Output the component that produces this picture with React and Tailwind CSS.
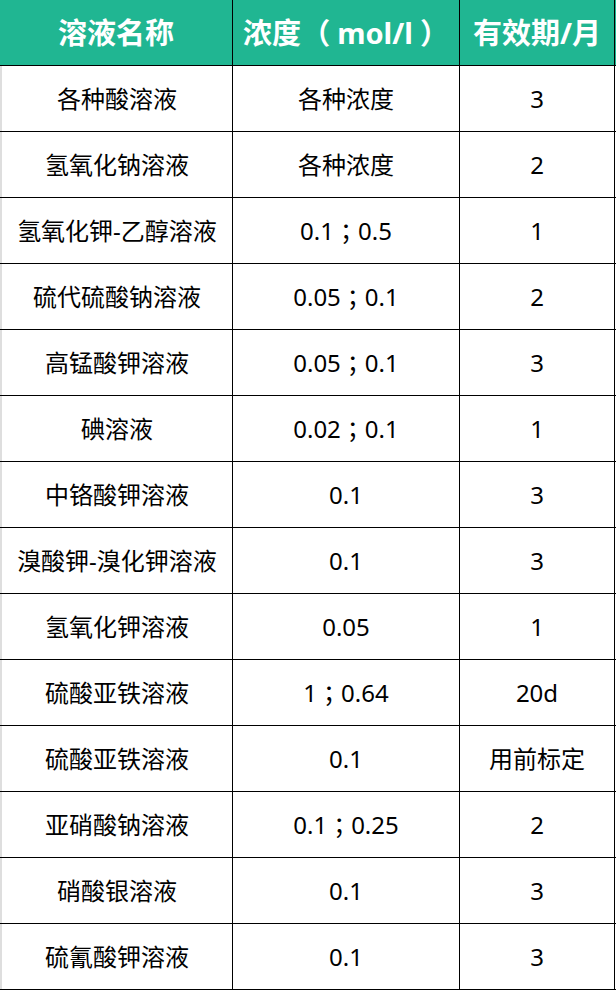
const rows = [
  ["各种酸溶液", "各种浓度", "3"],
  ["氢氧化钠溶液", "各种浓度", "2"],
  ["氢氧化钾-乙醇溶液", "0.1；0.5", "1"],
  ["硫代硫酸钠溶液", "0.05；0.1", "2"],
  ["高锰酸钾溶液", "0.05；0.1", "3"],
  ["碘溶液", "0.02；0.1", "1"],
  ["中铬酸钾溶液", "0.1", "3"],
  ["溴酸钾-溴化钾溶液", "0.1", "3"],
  ["氢氧化钾溶液", "0.05", "1"],
  ["硫酸亚铁溶液", "1；0.64", "20d"],
  ["硫酸亚铁溶液", "0.1", "用前标定"],
  ["亚硝酸钠溶液", "0.1；0.25", "2"],
  ["硝酸银溶液", "0.1", "3"],
  ["硫氰酸钾溶液", "0.1", "3"],
];

const font = { fontFamily: '"Noto Sans", "Noto Sans CJK SC", sans-serif' };
const centered = { fontFamily: '"Noto Sans CJK TC", sans-serif' };

// full-width semicolon sits in the middle of its box, like the original font
const Txt = ({ children }) =>
  children.split(/(；)/).map((part, i) =>
    part === "；" ? (
      <span key={i} style={centered}>
        {part}
      </span>
    ) : (
      part
    )
  );

export default function App() {
  return (
    <div className="w-[616px] bg-white" style={font}>
      {/* header */}
      <div className="grid h-[66px] grid-cols-[233px_227px_155px] border-b border-black bg-[#20b692] text-[29px] font-bold text-white">
        <div className="flex items-center justify-center border-r border-black">溶液名称</div>
        <div className="flex items-center justify-center border-r border-black">
          浓度<span className="mr-[7px]">（</span>mol/l<span className="ml-[7px]">）</span>
        </div>
        <div className="flex items-center justify-center border-r border-black">有效期/月</div>
      </div>

      {rows.map(([name, conc, life], i) => (
        <div
          key={i}
          className="grid h-[66px] grid-cols-[2px_231px_227px_155px] border-b border-black text-[24px] text-black"
        >
          <div className="bg-[#dedede]" />
          <div className="flex items-center justify-center border-r border-black">{name}</div>
          <div className="flex items-center justify-center border-r border-black whitespace-pre">
            <Txt>{conc}</Txt>
          </div>
          <div className="flex items-center justify-center border-r border-black">{life}</div>
        </div>
      ))}
    </div>
  );
}
